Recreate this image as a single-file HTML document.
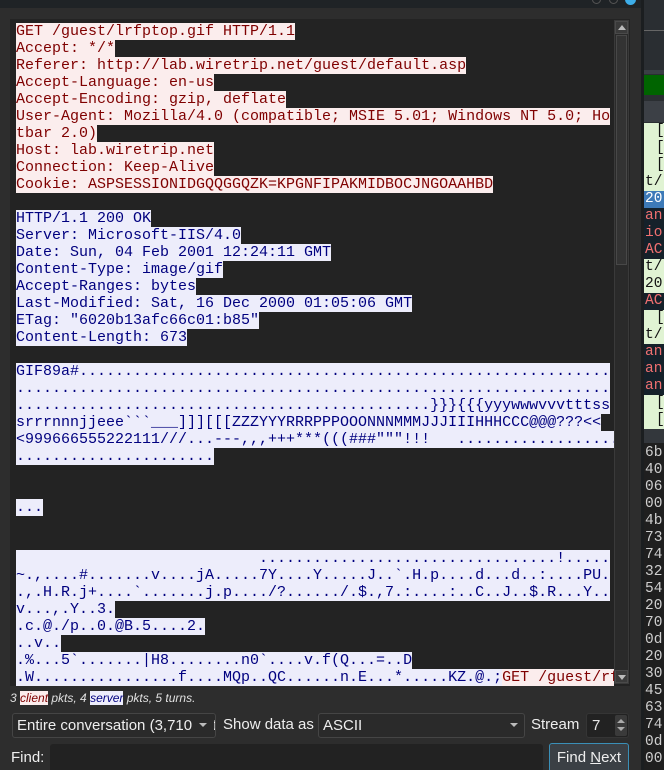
<!DOCTYPE html>
<html><head><meta charset="utf-8"><style>
*{margin:0;padding:0;box-sizing:border-box}
html,body{width:664px;height:770px;overflow:hidden}
body{background:#2d2d2d;position:relative;font-family:"Liberation Sans",sans-serif;color:#e6e6e6}
.topbar{position:absolute;left:0;top:0;width:641px;height:8px;background:#1f2326}
.ta{position:absolute;left:10px;top:19px;width:620px;height:667px;background:#232323;overflow:hidden}
.txt{position:absolute;left:6px;top:4px;width:598px;font-family:"Liberation Mono",monospace;font-size:15px;line-height:17px}
.l{height:17px;white-space:pre;overflow:hidden}
.l span{display:inline-block;height:17px;vertical-align:top}
.c{background:#fbeded;color:#7f0000}
.s{background:#ededfb;color:#00007f}
.sb{position:absolute;left:614px;top:20px;width:15px;height:664px;background:#2a2a2a;border:1px solid #3a3a3a}
.arr{position:absolute;left:0;width:13px;height:13px;background:#3a3a3a;border:1px solid #4a4a4a}
.handle{position:absolute;left:1px;top:14px;width:11px;height:230px;background:#333;border:1px solid #484848}
.status{position:absolute;left:10px;top:691px;font-size:12px;font-style:italic;color:#e0e0e0;white-space:nowrap}
.combo{position:absolute;top:713px;height:25px;background:#2a2a2a;border:1px solid #454545;border-radius:3px;font-size:15px;line-height:23px;padding-left:4px;color:#eee;overflow:hidden;white-space:nowrap}
.lab{position:absolute;font-size:15px;color:#eee;white-space:nowrap}
.tri{position:absolute;width:0;height:0;border-left:4px solid transparent;border-right:4px solid transparent}
.rp{position:absolute;left:641px;top:0;width:23px;height:770px;background:#2a2e32;border-left:3px solid #1b1e20;overflow:hidden;font-family:"Liberation Mono",monospace;font-size:14.5px;line-height:17px}
.rr{position:absolute;left:0;width:23px;height:17px;padding-left:1px;white-space:pre;overflow:hidden}
.g{background:#e0f3d3;color:#111}
.b{padding-left:12px}
.d{background:#15212a;color:#f07070}
</style></head><body>
<div class="topbar"></div>
<div style="position:absolute;left:592px;top:-5px;width:9px;height:9px;border-radius:50%;border:1px solid #555"></div>
<div style="position:absolute;left:609px;top:-5px;width:9px;height:9px;border-radius:50%;border:1px solid #555"></div>
<div style="position:absolute;left:625px;top:-6px;width:11px;height:11px;border-radius:50%;background:#3daee9"></div>
<div class="ta"><div class="txt"><div class="l"><span class="c">GET /guest/lrfptop.gif HTTP/1.1</span></div><div class="l"><span class="c">Accept: */*</span></div><div class="l"><span class="c">Referer: http://lab.wiretrip.net/guest/default.asp</span></div><div class="l"><span class="c">Accept-Language: en-us</span></div><div class="l"><span class="c">Accept-Encoding: gzip, deflate</span></div><div class="l"><span class="c">User-Agent: Mozilla/4.0 (compatible; MSIE 5.01; Windows NT 5.0; Ho</span></div><div class="l"><span class="c">tbar 2.0)</span></div><div class="l"><span class="c">Host: lab.wiretrip.net</span></div><div class="l"><span class="c">Connection: Keep-Alive</span></div><div class="l"><span class="c">Cookie: ASPSESSIONIDGQQGGQZK=KPGNFIPAKMIDBOCJNGOAAHBD</span></div><div class="l"></div><div class="l"><span class="s">HTTP/1.1 200 OK</span></div><div class="l"><span class="s">Server: Microsoft-IIS/4.0</span></div><div class="l"><span class="s">Date: Sun, 04 Feb 2001 12:24:11 GMT</span></div><div class="l"><span class="s">Content-Type: image/gif</span></div><div class="l"><span class="s">Accept-Ranges: bytes</span></div><div class="l"><span class="s">Last-Modified: Sat, 16 Dec 2000 01:05:06 GMT</span></div><div class="l"><span class="s">ETag: "6020b13afc66c01:b85"</span></div><div class="l"><span class="s">Content-Length: 673</span></div><div class="l"></div><div class="l"><span class="s">GIF89a#...........................................................</span></div><div class="l"><span class="s">..................................................................</span></div><div class="l"><span class="s">..............................................}}}{{{yyywwwvvvtttss</span></div><div class="l"><span class="s">srrrnnnjjeee&#96;&#96;&#96;___]]][[[ZZZYYYRRRPPPOOONNNMMMJJJIIIHHHCCC@@@???&lt;&lt;</span></div><div class="l"><span class="s">&lt;999666555222111///...---,,,+++***(((###"""!!!   ....................</span></div><div class="l"><span class="s">......................</span></div><div class="l"></div><div class="l"></div><div class="l"><span class="s">...</span></div><div class="l"></div><div class="l"></div><div class="l"><span class="s">                           .................................!.....</span></div><div class="l"><span class="s">~.,....#.......v....jA.....7Y....Y.....J..&#96;.H.p....d...d..:....PU.</span></div><div class="l"><span class="s">.,.H.R.j+....&#96;.......j.p..../?....../.$.,7.:....:..C..J..$.R...Y..</span></div><div class="l"><span class="s">v...,.Y..3.</span></div><div class="l"><span class="s">.c.@./p..0.@B.5....2.</span></div><div class="l"><span class="s">..v..</span></div><div class="l"><span class="s">.%...5&#96;.......|H8........n0&#96;....v.f(Q...=..D</span></div><div class="l"><span class="s">.W................f....MQp..QC......n.E...*.....KZ.@.;</span><span class="c">GET /guest/rf</span></div></div></div>
<div class="sb">
<div class="arr" style="top:0"><div class="tri" style="left:2px;top:3px;border-bottom:5px solid #bbb"></div></div>
<div class="handle"></div>
<div class="arr" style="top:649px"><div class="tri" style="left:2px;top:4px;border-top:5px solid #bbb"></div></div>
</div>
<div class="status">3 <span class="c">client</span> pkts, 4 <span class="s">server</span> pkts, 5 turns.</div>
<div class="combo" style="left:12px;width:204px">Entire conversation (3,710 bytes)</div>
<div style="position:absolute;left:194px;top:714px;width:20px;height:23px;background:#2a2a2a"></div>
<div class="tri" style="left:199px;top:723px;border-top:4px solid #bbb"></div>
<div class="lab" style="left:223px;top:716px">Show data as</div>
<div class="combo" style="left:318px;width:207px">ASCII</div>
<div class="tri" style="left:510px;top:723px;border-top:4px solid #bbb"></div>
<div class="lab" style="left:531px;top:716px">Stream</div>
<div style="position:absolute;left:586px;top:713px;width:43px;height:25px;background:#222;border:1px solid #353535;border-radius:3px;font-size:15px;line-height:23px;padding-left:5px">7</div>
<div style="position:absolute;left:615px;top:715px;width:12px;height:21px;background:#3a3a3a;border-radius:2px"></div>
<div class="tri" style="left:617px;top:719px;border-bottom:4px solid #aaa"></div>
<div class="tri" style="left:617px;top:727px;border-top:4px solid #aaa"></div>
<div class="lab" style="left:11px;top:749px">Find:</div>
<div style="position:absolute;left:50px;top:744px;width:493px;height:30px;background:#222;border-radius:3px"></div>
<div style="position:absolute;left:549px;top:743px;width:80px;height:30px;background:#3b4045;border:1px solid #3a8fb7;border-radius:3px;font-size:15px;line-height:28px;text-align:center;color:#eee">Find <u>N</u>ext</div>
<div class="rp">
<div style="position:absolute;left:0;top:30px;width:23px;height:1px;background:#666"></div>
<div style="position:absolute;left:0;top:70px;width:23px;height:4px;background:#3a3f45"></div>
<div style="position:absolute;left:0;top:75px;width:23px;height:20px;background:#006400"></div>
<div style="position:absolute;left:0;top:101px;width:23px;height:21px;background:#3c4046"></div>
<div class="rr g b" style="top:123px">[</div>
<div class="rr g b" style="top:140px">[</div>
<div class="rr g b" style="top:157px">[</div>
<div class="rr g" style="top:174px">t/</div>
<div class="rr" style="top:191px;background:#3d7ab8;color:#fff">20</div>
<div class="rr d" style="top:208px">an</div>
<div class="rr d" style="top:225px">io</div>
<div class="rr d" style="top:242px">AC</div>
<div class="rr g" style="top:259px">t/</div>
<div class="rr g" style="top:276px">20</div>
<div class="rr d" style="top:293px">AC</div>
<div class="rr g b" style="top:310px">[</div>
<div class="rr g" style="top:327px">t/</div>
<div class="rr d" style="top:344px">an</div>
<div class="rr d" style="top:361px">an</div>
<div class="rr d" style="top:378px">an</div>
<div class="rr g b" style="top:395px">[</div>
<div class="rr g b" style="top:412px">[</div>
<div style="position:absolute;left:0;top:429px;width:23px;height:14px;background:#33373c"></div>
<div style="position:absolute;left:0;top:443px;width:23px;height:327px;background:#1f1f1f;color:#cfcfcf">
<div class="rr" style="top:2px">6b</div><div class="rr" style="top:19px">40</div><div class="rr" style="top:36px">06</div><div class="rr" style="top:53px">00</div><div class="rr" style="top:70px">4b</div><div class="rr" style="top:87px">73</div><div class="rr" style="top:104px">74</div><div class="rr" style="top:121px">32</div><div class="rr" style="top:138px">54</div><div class="rr" style="top:155px">20</div><div class="rr" style="top:172px">70</div><div class="rr" style="top:189px">0d</div><div class="rr" style="top:206px">20</div><div class="rr" style="top:223px">30</div><div class="rr" style="top:240px">45</div><div class="rr" style="top:257px">63</div><div class="rr" style="top:274px">74</div><div class="rr" style="top:291px">0d</div><div class="rr" style="top:308px">00</div>
</div>
</div>
</body></html>
